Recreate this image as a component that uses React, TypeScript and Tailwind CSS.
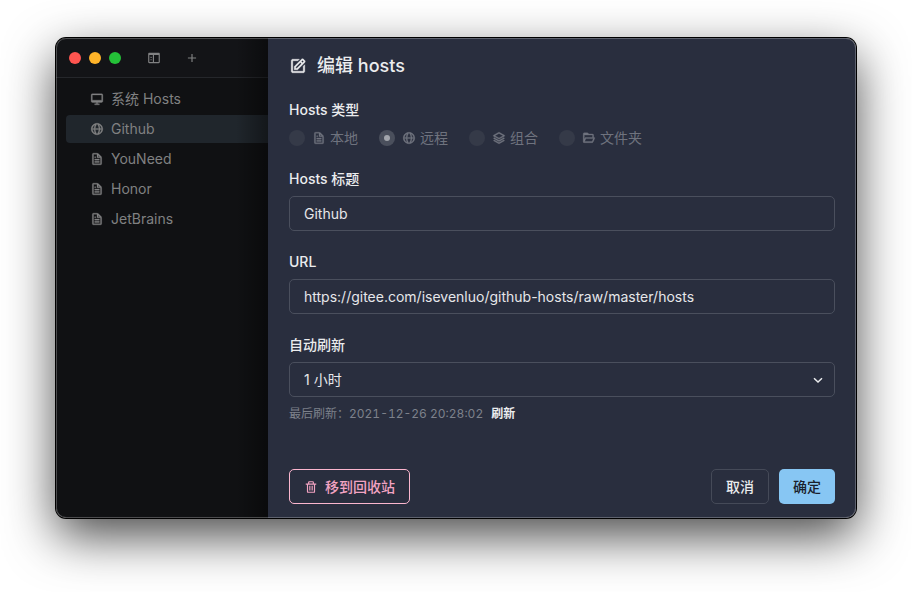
import React from 'react'
import type { IconType } from 'react-icons'
import {
  BiDesktop,
  BiEdit,
  BiFile,
  BiFolderOpen,
  BiGlobe,
  BiLayer,
  BiPlus,
  BiSidebar,
  BiTrash,
} from 'react-icons/bi'

type HostsItem = { title: string; icon: IconType }

const items: HostsItem[] = [
  { title: '系统 Hosts', icon: BiDesktop },
  { title: 'Github', icon: BiGlobe },
  { title: 'YouNeed', icon: BiFile },
  { title: 'Honor', icon: BiFile },
  { title: 'JetBrains', icon: BiFile },
]

const types: { value: string; label: string; icon: IconType }[] = [
  { value: 'local', label: '本地', icon: BiFile },
  { value: 'remote', label: '远程', icon: BiGlobe },
  { value: 'group', label: '组合', icon: BiLayer },
  { value: 'folder', label: '文件夹', icon: BiFolderOpen },
]

function Sidebar() {
  return (
    <aside className="relative flex w-[212px] shrink-0 flex-col bg-[#101113] text-[#808182]">
      <header className="flex h-10 items-center border-b border-[#25272b] bg-[#131417] pl-[13px]">
        <div className="flex gap-2">
          <span className="size-3 rounded-full bg-[#ff5550]" />
          <span className="size-3 rounded-full bg-[#ffb429]" />
          <span className="size-3 rounded-full bg-[#24c138]" />
        </div>
        <button type="button" aria-label="Toggle sidebar" className="ml-[26px]">
          <BiSidebar className="size-3.5" />
        </button>
        <button type="button" aria-label="Add hosts" className="ml-6">
          <BiPlus className="size-3.5" />
        </button>
      </header>
      <nav className="flex flex-col gap-0.5 py-[7px] pl-2.5">
        {items.map(({ title, icon: Icon }) => (
          <button
            key={title}
            type="button"
            className={
              'flex h-7 items-center gap-[7px] rounded-l pl-6 text-left text-sm ' +
              (title === 'Github' ? 'bg-[#20262c]' : '')
            }
          >
            <Icon className="size-3.5 stroke-current stroke-[0.5]" />
            <span>{title}</span>
          </button>
        ))}
      </nav>
      <div className="pointer-events-none absolute inset-y-0 right-0 w-8 bg-linear-to-l from-black/40 to-transparent" />
    </aside>
  )
}

function Field({ id, label, children }: { id: string; label: string; children: React.ReactNode }) {
  return (
    <div className="flex flex-col gap-[7px]">
      <label htmlFor={id} className="text-sm/5 font-medium">
        {label}
      </label>
      {children}
    </div>
  )
}

const inputClass =
  'h-[35px] w-full appearance-none rounded-[5px] border border-[#4a4f5d] bg-transparent px-3.5 text-sm text-[#e6e7ea] outline-none'

function EditPanel() {
  return (
    <form className="flex min-w-0 flex-1 flex-col bg-[#292e3e] px-[21px] py-3.5 text-[#ebecee]">
      <h1 className="flex items-center gap-2.5 text-lg/[27px] font-medium">
        <BiEdit className="size-[18px] stroke-current stroke-[0.5]" />
        编辑 hosts
      </h1>
      <div className="mt-[21px] flex flex-col gap-[21px]">
        <fieldset className="flex flex-col">
          <legend className="mb-[7px] text-sm/5 font-medium">Hosts 类型</legend>
          <div className="flex gap-[21px]">
            {types.map(({ value, label, icon: Icon }) => (
              <label key={value} className="flex h-[21px] items-center text-sm text-[#6f737e]">
                <input
                  type="radio"
                  name="type"
                  value={value}
                  defaultChecked={value === 'remote'}
                  disabled
                  className="mr-[7px] flex size-4 appearance-none items-center justify-center rounded-full bg-[#353a48] checked:bg-[#4a4f5c] checked:before:size-1.5 checked:before:rounded-full checked:before:bg-[#a2a5ac]"
                />
                <Icon className="mr-1 size-3.5 stroke-current stroke-[0.5]" />
                {label}
              </label>
            ))}
          </div>
        </fieldset>
        <Field id="title" label="Hosts 标题">
          <input id="title" type="text" defaultValue="Github" className={inputClass} />
        </Field>
        <Field id="url" label="URL">
          <input
            id="url"
            type="text"
            defaultValue="https://gitee.com/isevenluo/github-hosts/raw/master/hosts"
            className={inputClass}
          />
        </Field>
        <Field id="refresh" label="自动刷新">
          <div className="relative">
            <select id="refresh" defaultValue="1h" className={inputClass}>
              <option value="1h">1 小时</option>
            </select>
            <svg
              viewBox="0 0 18 18"
              className="pointer-events-none absolute top-1/2 right-2 size-[18px] -translate-y-1/2 fill-none stroke-[#ebecee] stroke-[1.5]"
            >
              <path d="M5 7.2 9 11l4-3.8" />
            </svg>
          </div>
          <div className="flex items-center gap-2 text-xs/5 text-[#7d818b]">
            <span className="tabular-nums">最后刷新：2021-12-26 20:28:02</span>
            <button type="button" className="font-bold text-[#ebecee]">
              刷新
            </button>
          </div>
        </Field>
      </div>
      <footer className="mt-auto flex items-center gap-2.5 text-sm/[18px] font-medium">
        <button
          type="button"
          className="mr-auto flex h-[35px] items-center gap-[7px] rounded-[5px] border border-[#fbb6ce] px-3.5 text-[#f2a3c2]"
        >
          <BiTrash className="size-3.5" />
          移到回收站
        </button>
        <button type="button" className="h-[35px] rounded-[5px] border border-[#454a58] px-3.5">
          取消
        </button>
        <button type="submit" className="h-[35px] rounded-[5px] bg-[#87c6f3] px-3.5 text-[#1a202c]">
          确定
        </button>
      </footer>
    </form>
  )
}

export default function App() {
  return (
    <main className="min-h-screen bg-white px-14 pt-[38px] pb-[74px] font-['Inter','Noto_Sans_CJK_SC',sans-serif] antialiased">
      <div className="rounded-[10px] shadow-[0_0_0_1px_#000,0_18px_50px_rgba(0,0,0,0.72)]">
        <div className="relative flex min-h-[480px] overflow-hidden rounded-[10px]">
          <Sidebar />
          <EditPanel />
          <div className="pointer-events-none absolute inset-0 rounded-[10px] border border-white/25" />
        </div>
      </div>
    </main>
  )
}
